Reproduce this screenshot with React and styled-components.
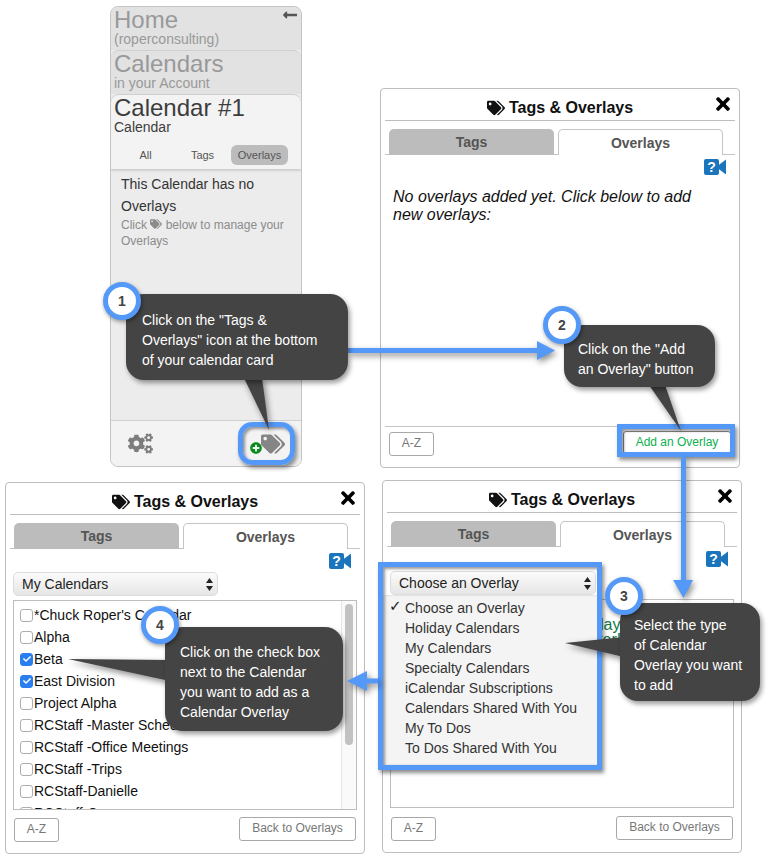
import React from "react";
import styled, { createGlobalStyle } from "styled-components";
import { FaTags, FaTimes, FaCogs, FaPlusCircle, FaLongArrowAltLeft, FaCheck } from "react-icons/fa";

const BLUE = "#5599f8";
const SHADOW = "drop-shadow(2px 3px 3px rgba(0,0,0,.45))";

const Global = createGlobalStyle`
  html, body { margin: 0; padding: 0; background: #fff; }
  body { font-family: "Liberation Sans", Arial, sans-serif; -webkit-font-smoothing: antialiased; }
  * { box-sizing: border-box; }
`;

const Canvas = styled.div`
  position: relative;
  width: 768px;
  height: 859px;
  overflow: hidden;
  background: #fff;
`;

/* ---------- calendar card ---------- */
const Card = styled.section`
  position: absolute;
  left: 110px;
  top: 6px;
  width: 192px;
  height: 461px;
  display: flex;
  flex-direction: column;
  border: 1px solid #c4c4c4;
  border-radius: 8px;
  overflow: hidden;
  background: #ececec;
`;
const Crumb = styled.div`
  position: relative;
  height: ${(p) => p.$h}px;
  flex: none;
  padding-left: 3px;
  background: ${(p) => (p.$active ? "#f3f3f3" : "#e2e2e2")};
  border-top: ${(p) => (p.$first ? "0" : "1px solid #cfcfcf")};
  border-radius: 8px 8px 0 0;
  color: ${(p) => (p.$active ? "#3d3d3d" : "#999")};
  box-shadow: ${(p) => (p.$active ? "0 2px 2px rgba(0,0,0,.12)" : "none")};
  z-index: ${(p) => (p.$active ? 1 : 0)};
`;
const CrumbTitle = styled.div`
  font-size: 24px;
  line-height: 25px;
`;
const CrumbSub = styled.div`
  font-size: 14px;
  line-height: 14px;
`;
const BackArrow = styled.span`
  position: absolute;
  right: 3px;
  top: 0;
  color: #555;
  font-size: 16px;
  line-height: 16px;
`;
const FilterRow = styled.div`
  display: grid;
  grid-template-columns: repeat(3, 57px);
  margin-top: 11px;
  padding-left: 3px;
`;
const Filter = styled.div`
  height: 20px;
  border-radius: 6px;
  text-align: center;
  font-size: 11px;
  line-height: 20px;
  color: #555;
  background: ${(p) => (p.$on ? "#bcbcbc" : "transparent")};
`;
const CardBody = styled.div`
  flex: 1;
  padding: 4px 10px 0;
  color: #333;
  font-size: 14px;
  line-height: 22px;
`;
const CardHint = styled.div`
  font-size: 12px;
  line-height: 16px;
  color: #8b8b8b;
  svg { vertical-align: -1px; }
`;
const CardFooter = styled.div`
  flex: none;
  height: 46px;
  display: flex;
  align-items: center;
  justify-content: space-between;
  padding: 0 16px 0 17px;
  background: #f3f3f3;
  border-top: 1px solid #d0d0d0;
  color: #7d7d7d;
`;
const AddTag = styled.div`
  display: flex;
  align-items: center;
  color: #858585;
`;
const GreenPlus = styled(FaPlusCircle)`
  color: #0b8a1c;
  position: relative;
  top: 4px;
  margin-left: 1px;
  margin-right: -1px;
`;

/* ---------- dialog panels ---------- */
const Panel = styled.section`
  position: absolute;
  left: ${(p) => p.$x}px;
  top: ${(p) => p.$y}px;
  width: 360px;
  height: ${(p) => p.$h}px;
  display: flex;
  flex-direction: column;
  padding: 0 4px;
  background: #fff;
  border: 1px solid #bdbdbd;
  border-radius: 4px;
`;
const TitleBar = styled.header`
  position: relative;
  flex: none;
  height: 32px;
  padding-top: 6px;
  display: flex;
  align-items: center;
  justify-content: center;
  gap: 4px;
  border-bottom: 1px solid #bdbdbd;
  font-size: 16px;
  font-weight: 700;
  color: #111;
`;
const Close = styled.span`
  position: absolute;
  right: 2px;
  top: 5px;
  color: #000;
  line-height: 0;
`;
const TabRow = styled.div`
  flex: none;
  display: flex;
  gap: 4px;
  height: 26px;
  margin-top: 8px;
  padding-left: 4px;
  border-bottom: 1px solid #c4c4c4;
`;
const Tab = styled.div`
  width: 165px;
  height: 26px;
  text-align: center;
  font-size: 14px;
  font-weight: 700;
  line-height: 26px;
  color: #555;
  background: ${(p) => (p.$on ? "#fff" : "#bcbcbc")};
  border: ${(p) => (p.$on ? "1px solid #c4c4c4" : "0")};
  border-bottom: 0;
  border-radius: 5px 5px 0 0;
`;
const HelpRow = styled.div`
  flex: none;
  height: 16px;
  margin-top: 4px;
  padding-right: 9px;
  display: flex;
  justify-content: flex-end;
`;
const Empty = styled.p`
  flex: 1;
  margin: 13px 0 0;
  padding: 0 30px 0 8px;
  font-size: 16px;
  font-style: italic;
  line-height: 18px;
  color: #111;
`;
const PanelFooter = styled.footer`
  flex: none;
  height: 41px;
  border-top: 1px solid #c4c4c4;
  padding: 5px 4px 0;
  display: flex;
  justify-content: space-between;
  align-items: flex-start;
`;
const Btn = styled.div`
  height: ${(p) => p.$h || 24}px;
  width: ${(p) => p.$w}px;
  border: 1px solid ${(p) => p.$line || "#a8a8a8"};
  border-radius: 3px;
  background: #fff;
  text-align: center;
  font-size: 12px;
  line-height: ${(p) => (p.$h || 24) - 3}px;
  color: ${(p) => p.$ink || "#777"};
  margin-top: ${(p) => p.$top || 0}px;
`;
const Dropdown = styled.div`
  flex: none;
  width: ${(p) => p.$w}px;
  height: 24px;
  margin: ${(p) => p.$top}px 0 0 3px;
  padding: 0 4px 0 8px;
  display: flex;
  align-items: center;
  justify-content: space-between;
  border: 1px solid #dcdcdc;
  border-radius: 5px;
  background: linear-gradient(#fbfbfb, #e6e6e6);
  font-size: 14px;
  color: #222;
`;
const ListBox = styled.div`
  position: relative;
  flex: none;
  width: 344px;
  height: ${(p) => p.$h}px;
  margin: 4px 0 0 3px;
  border: 1px solid #bdbdbd;
  padding-top: 3px;
  overflow: hidden;
`;
const ScrollTrack = styled.div`
  position: absolute;
  top: 0;
  right: 0;
  bottom: 0;
  width: 15px;
  background: #fafafa;
  border-left: 1px solid #e6e6e6;
`;
const ScrollThumb = styled.div`
  position: absolute;
  top: 3px;
  left: 3px;
  width: 8px;
  height: 141px;
  border-radius: 4px;
  background: #c2c2c2;
`;
const Row = styled.label`
  display: flex;
  align-items: center;
  gap: 1px;
  height: 22px;
  padding-left: 6px;
  font-size: 14px;
  color: #111;
  white-space: nowrap;
`;
const Box = styled.span`
  width: 13px;
  height: 13px;
  flex: none;
  display: flex;
  align-items: center;
  justify-content: center;
  border: 1px solid ${(p) => (p.$on ? "#2a7ff0" : "#adadad")};
  border-radius: 3px;
  background: ${(p) => (p.$on ? "#2a7ff0" : "#fff")};
  color: #fff;
`;
const Notice = styled.div`
  margin-top: ${(p) => p.$top || 0}px;
  padding-left: ${(p) => p.$indent}px;
  font-size: 16px;
  line-height: 15px;
  color: #0f7a45;
  white-space: nowrap;
`;
const BottomRow = styled.div`
  flex: none;
  display: flex;
  justify-content: space-between;
  align-items: flex-start;
  margin: ${(p) => p.$top}px 4px 0 4px;
`;

/* ---------- annotation overlays ---------- */
const Drawing = styled.svg`
  position: absolute;
  left: 0;
  top: 0;
  width: 768px;
  height: 859px;
  pointer-events: none;
  filter: ${SHADOW};
`;
const Highlight = styled.div`
  position: absolute;
  left: ${(p) => p.$x}px;
  top: ${(p) => p.$y}px;
  width: ${(p) => p.$w}px;
  height: ${(p) => p.$h}px;
  display: flex;
  flex-direction: column;
  justify-content: flex-end;
  border: 5px solid ${BLUE};
  border-radius: ${(p) => p.$r || 0}px;
  box-shadow: 2px 3px 4px rgba(0,0,0,.45), inset 2px 2px 3px rgba(0,0,0,.4);
`;
const Menu = styled.div`
  height: 170px;
  padding-top: 3px;
  background: #f4f4f4;
  box-shadow: inset 3px 0 3px -1px rgba(0,0,0,.4);
`;
const MenuItem = styled.div`
  position: relative;
  height: 20px;
  padding-left: 22px;
  font-size: 14px;
  line-height: 20px;
  color: #333;
`;
const Tick = styled.span`
  position: absolute;
  left: 6px;
  top: -2px;
  font-size: 15px;
  font-weight: 700;
  color: #222;
  font-family: "DejaVu Sans", sans-serif;
`;
const Callout = styled.div`
  position: absolute;
  left: ${(p) => p.$x}px;
  top: ${(p) => p.$y}px;
  width: ${(p) => p.$w}px;
  height: ${(p) => p.$h}px;
  padding: ${(p) => p.$py}px 0 0 ${(p) => p.$px}px;
  border-radius: 18px;
  background: #444;
  color: #fff;
  font-size: 14px;
  line-height: 20px;
  box-shadow: 2px 3px 5px rgba(0,0,0,.4);
  white-space: nowrap;
`;
const Badge = styled.div`
  position: absolute;
  left: ${(p) => p.$cx - 19}px;
  top: ${(p) => p.$cy - 19}px;
  width: 38px;
  height: 38px;
  border: 5px solid ${BLUE};
  border-radius: 50%;
  background: #fff;
  display: flex;
  align-items: center;
  justify-content: center;
  font-size: 14px;
  font-weight: 700;
  color: #444;
  box-shadow: 1px 2px 4px rgba(0,0,0,.4);
`;

/* ---------- small drawings ---------- */
const HelpIcon = () => (
  <svg width="22" height="16" viewBox="0 0 22 16">
    <rect x="0" y="0" width="15" height="16" rx="2" fill="#1b75bc" />
    <polygon points="14,6.5 22,0.5 22,15.5 14,9.5" fill="#1b75bc" />
    <text x="7.5" y="13" textAnchor="middle" fontFamily="Liberation Sans" fontWeight="700" fontSize="14" fill="#fff">?</text>
  </svg>
);
const SelectArrows = () => (
  <svg width="7" height="13" viewBox="0 0 7 13">
    <polygon points="3.5,0 7,5 0,5" fill="#222" />
    <polygon points="3.5,13 7,8 0,8" fill="#222" />
  </svg>
);

const PanelHead = () => (
  <>
    <TitleBar>
      <FaTags size={18} />
      <span>Tags &amp; Overlays</span>
      <Close><FaTimes size={20} /></Close>
    </TitleBar>
    <TabRow>
      <Tab>Tags</Tab>
      <Tab $on>Overlays</Tab>
    </TabRow>
    <HelpRow><HelpIcon /></HelpRow>
  </>
);

const calendars = [
  ["*Chuck Roper's Calendar", false],
  ["Alpha", false],
  ["Beta", true],
  ["East Division", true],
  ["Project Alpha", false],
  ["RCStaff -Master Schedule", false],
  ["RCStaff -Office Meetings", false],
  ["RCStaff -Trips", false],
  ["RCStaff-Danielle", false],
  ["RCStaff-Carson", false],
];
const menuItems = [
  "Choose an Overlay",
  "Holiday Calendars",
  "My Calendars",
  "Specialty Calendars",
  "iCalendar Subscriptions",
  "Calendars Shared With You",
  "My To Dos",
  "To Dos Shared With You",
];

export default function App() {
  return (
    <Canvas>
      <Global />

      <Card>
        <Crumb $first $h={43}>
          <CrumbTitle>Home</CrumbTitle>
          <CrumbSub>(roperconsulting)</CrumbSub>
          <BackArrow><FaLongArrowAltLeft size={16} /></BackArrow>
        </Crumb>
        <Crumb $h={44}>
          <CrumbTitle>Calendars</CrumbTitle>
          <CrumbSub>in your Account</CrumbSub>
        </Crumb>
        <Crumb $active $h={75}>
          <CrumbTitle>Calendar #1</CrumbTitle>
          <CrumbSub>Calendar</CrumbSub>
          <FilterRow>
            <Filter>All</Filter>
            <Filter>Tags</Filter>
            <Filter $on>Overlays</Filter>
          </FilterRow>
        </Crumb>
        <CardBody>
          This Calendar has no Overlays
          <CardHint>
            Click <FaTags size={12} /> below to manage your Overlays
          </CardHint>
        </CardBody>
        <CardFooter>
          <FaCogs size={25} />
          <AddTag>
            <GreenPlus size={12} />
            <FaTags size={24} />
          </AddTag>
        </CardFooter>
      </Card>

      <Panel $x={380} $y={88} $h={380}>
        <PanelHead />
        <Empty>No overlays added yet. Click below to add new overlays:</Empty>
        <PanelFooter>
          <Btn $w={45}>A-Z</Btn>
          <Btn $w={108} $h={23} $top={-1} $line="#888" $ink="#0bb04f">Add an Overlay</Btn>
        </PanelFooter>
      </Panel>

      <Panel $x={5} $y={482} $h={372}>
        <PanelHead />
        <Dropdown $w={205} $top={3}>
          <span>My Calendars</span>
          <SelectArrows />
        </Dropdown>
        <ListBox $h={210}>
          {calendars.map(([name, on]) => (
            <Row key={name}>
              <Box $on={on}>{on && <FaCheck size={8} />}</Box>
              {name}
            </Row>
          ))}
          <ScrollTrack><ScrollThumb /></ScrollTrack>
        </ListBox>
        <BottomRow $top={7}>
          <Btn $w={45} $top={1}>A-Z</Btn>
          <Btn $w={117}>Back to Overlays</Btn>
        </BottomRow>
      </Panel>

      <Panel $x={382} $y={480} $h={373}>
        <PanelHead />
        <Dropdown $w={206} $top={4}>
          <span>Choose an Overlay</span>
          <SelectArrows />
        </Dropdown>
        <ListBox $h={209}>
          <Notice $indent={96} $top={14}>Choose an overlay calendar</Notice>
          <Notice $indent={136}>Use the filter!</Notice>
        </ListBox>
        <BottomRow $top={8}>
          <Btn $w={45} $top={1}>A-Z</Btn>
          <Btn $w={117}>Back to Overlays</Btn>
        </BottomRow>
      </Panel>

      <Highlight $x={238} $y={422} $w={57} $h={43} $r={14} />
      <Highlight $x={617} $y={424} $w={118} $h={33} />
      <Highlight $x={378} $y={562} $w={224} $h={208}>
        <Menu>
          {menuItems.map((item, i) => (
            <MenuItem key={item}>
              {i === 0 && <Tick>✓</Tick>}
              {item}
            </MenuItem>
          ))}
        </Menu>
      </Highlight>

      <Drawing viewBox="0 0 768 859">
        <g fill="#444">
          <polygon points="244,378 262,378 269,430" />
          <polygon points="649,385 665,385 681,431" />
          <polygon points="624,637 565,643 624,657" />
          <polygon points="170,660 68,659 170,681" />
        </g>
        <g fill={BLUE}>
          <polygon points="348,348 537,348 537,341 555,350.5 537,360 537,353 348,353" />
          <polygon points="681,457 686,457 686,580 693,580 683.5,598 673,580 681,580" />
          <polygon points="378,678.5 367,678.5 367,671 347,681 367,691 367,683.5 378,683.5" />
        </g>
      </Drawing>

      <Callout $x={126} $y={294} $w={222} $h={86} $px={16} $py={16}>
        Click on the "Tags &amp;<br />Overlays" icon at the bottom<br />of your calendar card
      </Callout>
      <Callout $x={564} $y={325} $w={151} $h={62} $px={14} $py={14}>
        Click on the "Add<br />an Overlay" button
      </Callout>
      <Callout $x={620} $y={603} $w={140} $h={98} $px={14} $py={12}>
        Select the type<br />of Calendar<br />Overlay you want<br />to add
      </Callout>
      <Callout $x={165} $y={627} $w={178} $h={104} $px={15} $py={15}>
        Click on the check box<br />next to the Calendar<br />you want to add as a<br />Calendar Overlay
      </Callout>

      <Badge $cx={122} $cy={301}>1</Badge>
      <Badge $cx={562} $cy={325}>2</Badge>
      <Badge $cx={624} $cy={596}>3</Badge>
      <Badge $cx={160} $cy={625}>4</Badge>
    </Canvas>
  );
}
